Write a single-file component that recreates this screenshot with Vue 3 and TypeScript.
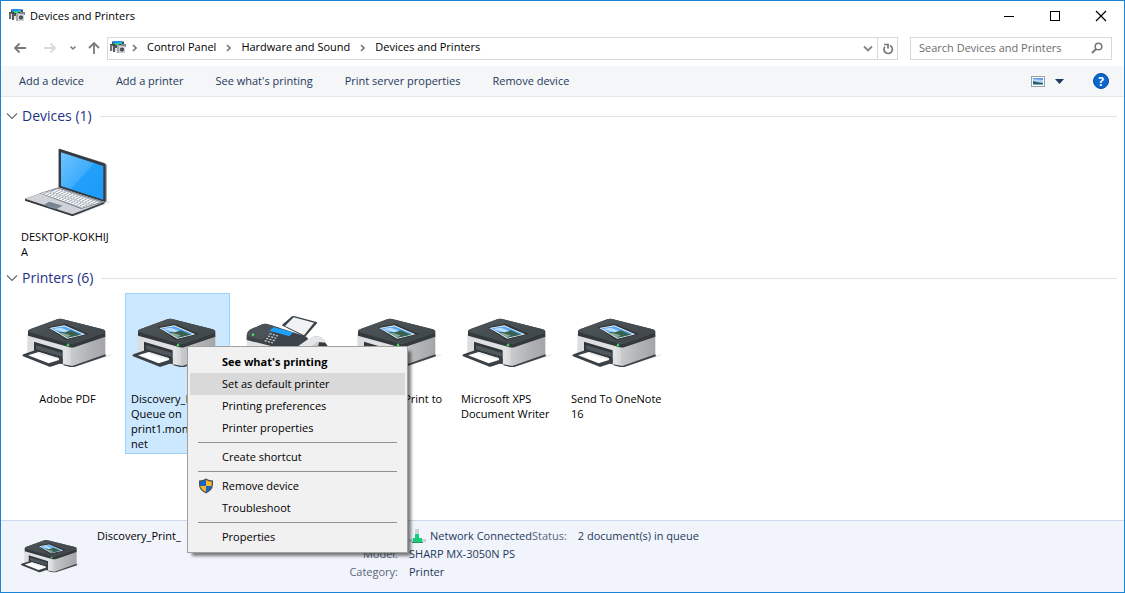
<script setup lang="ts">
import { ref } from 'vue'

type IconKind = 'laptop' | 'printer' | 'fax'

interface Device {
  id: string
  lines: string[]
  icon: IconKind
}

interface Group {
  title: string
  items: Device[]
}

interface MenuEntry {
  label: string
  bold?: boolean
  shield?: boolean
  separatorBefore?: boolean
}

const crumbs: string[] = ['Control Panel', 'Hardware and Sound', 'Devices and Printers']

const commands: string[] = [
  'Add a device',
  'Add a printer',
  "See what's printing",
  'Print server properties',
  'Remove device',
]

const groups: Group[] = [
  { title: 'Devices', items: [{ id: 'desktop', lines: ['DESKTOP-KOKHIJ', 'A'], icon: 'laptop' }] },
  {
    title: 'Printers',
    items: [
      { id: 'pdf', lines: ['Adobe PDF'], icon: 'printer' },
      { id: 'discovery', lines: ['Discovery_Print_', 'Queue on', 'print1.mon', 'net'], icon: 'printer' },
      { id: 'fax', lines: [], icon: 'fax' },
      { id: 'print-to', lines: ['Microsoft Print to'], icon: 'printer' },
      { id: 'xps', lines: ['Microsoft XPS', 'Document Writer'], icon: 'printer' },
      { id: 'onenote', lines: ['Send To OneNote', '16'], icon: 'printer' },
    ],
  },
]

const menu: MenuEntry[] = [
  { label: "See what's printing", bold: true },
  { label: 'Set as default printer' },
  { label: 'Printing preferences' },
  { label: 'Printer properties' },
  { label: 'Create shortcut', separatorBefore: true },
  { label: 'Remove device', shield: true, separatorBefore: true },
  { label: 'Troubleshoot' },
  { label: 'Properties', separatorBefore: true },
]

const selected = ref('discovery')
const highlighted = ref('Set as default printer')
const query = ref('')
</script>

<template>
  <div class="window">
    <svg class="defs" width="0" height="0" aria-hidden="true">
      <defs>
        <linearGradient id="side" x1="0" x2="1" y1="0" y2="0">
          <stop offset="0" stop-color="#c9cacc" />
          <stop offset="0.5" stop-color="#b3b4b6" />
          <stop offset="1" stop-color="#a4a5a8" />
        </linearGradient>
        <linearGradient id="front" x1="0" x2="1" y1="0" y2="0">
          <stop offset="0" stop-color="#dcdde0" />
          <stop offset="0.85" stop-color="#e1e2e4" />
          <stop offset="1" stop-color="#cfd0d2" />
        </linearGradient>
        <linearGradient id="lid" x1="0" x2="1" y1="0" y2="1">
          <stop offset="0" stop-color="#50575b" />
          <stop offset="1" stop-color="#3d4448" />
        </linearGradient>
        <linearGradient id="glass" x1="0" x2="1" y1="0" y2="1">
          <stop offset="0" stop-color="#6fc4ff" />
          <stop offset="0.5" stop-color="#3fadfc" />
          <stop offset="0.51" stop-color="#22a0fb" />
          <stop offset="1" stop-color="#1a9bfa" />
        </linearGradient>
        <pattern id="keys" width="9" height="7" patternUnits="userSpaceOnUse" patternTransform="matrix(1 .33 -.9 .33 0 0)">
          <rect width="9" height="7" fill="#a0a7b0" />
          <rect width="7" height="5" fill="#fafbfc" />
        </pattern>
        <symbol id="printer" viewBox="0 0 286 178" overflow="visible">
          <path d="M180 172 276 134 291 133 286 139 274 140Z" fill="#e6e6e8" opacity=".7" />
          <path d="M37 72 170 108 173 170 145 164 37 132Z" fill="url(#front)" />
          <path d="M168 108 271 76 271 136 176 169 168 168Z" fill="url(#side)" />
          <path d="M145 163 172 168 271 133 273 139 178 171 165 171 145 166Z" fill="#3c4348" />
          <path d="M39 63Q39 60 47 57L127 28Q133 25 141 27L263 58Q271 60 271 65V80L180 111Q172 114 164 112L39 77Z" fill="#33393d" />
          <path d="M39 63Q39 60 47 57L127 28Q133 25 141 27L263 58Q271 60 271 65L180 98Q172 101 164 99Z" fill="url(#lid)" />
          <path d="M39 64 164 100Q172 102 180 99L271 66" fill="none" stroke="#596064" stroke-width="1.5" />
          <path d="M98 51 151 41 222 72 153 91Z" fill="#30363a" />
          <path d="M103 54 148 46 211 73 157 86Z" fill="#f5f8fb" />
          <path d="M109 55 148 49 204 72 158 83Z" fill="#55a8f4" />
          <path d="M112 57 138 53 172 67 154 72 142 65Z" fill="#b9dcff" />
          <path d="M132 66 150 67 168 61 186 69 198 74 158 83Z" fill="#36624f" />
          <path d="M129 68 143 69 167 76 158 82Z" fill="#8aa996" />
          <path d="M57 95 143 121V163L57 137Z" fill="#30373b" />
          <path d="M63 105 140 128V140L63 118Z" fill="#50585d" />
          <path d="M22 136Q22 134 27 132L60 121 143 146V158L107 170Q102 171 98 168L24 139Z" fill="#3b4247" />
          <path d="M39 136 71 126 132 145V150L101 160Z" fill="#fff" />
          <path d="M71 126 132 145V150L68 130Z" fill="#e9eaec" />
          <path d="M155 104 160 100 163 105 162 109 155 107Z" fill="#42e35b" />
        </symbol>
        <symbol id="laptop" viewBox="0 0 300 240" overflow="visible">
          <path d="M178 222 275 182 291 186 184 228Z" fill="#ededee" />
          <path d="M131 29Q131 25 135 27L270 69Q276 71 276 76V183L268 188 131 144Z" fill="#a8adb1" />
          <path d="M131 29Q131 25 135 27L267 70Q272 72 272 76V187L131 143Z" fill="#363a3e" />
          <path d="M138 37 265 78V179L138 138Z" fill="url(#glass)" />
          <path d="M30 176 130 142 268 186V191L176 227Q172 229 168 227L30 182Z" fill="#373c41" />
          <path d="M30 176 130 142 268 186 176 221Q172 223 168 221Z" fill="#cfd3d9" />
          <path d="M73 160 131 143 268 186 198 207Z" fill="#7d8894" />
          <path d="M78 160 132 146 258 186 200 204Z" fill="url(#keys)" />
          <path d="M85 195 103 185 143 197 123 208Z" fill="#758392" />
          <path d="M98 199 113 203 133 200" fill="none" stroke="#8d99a5" stroke-width="2" />
        </symbol>
        <symbol id="fax" viewBox="0 0 300 200" overflow="visible">
          <path d="M50 142 160 180 290 178 284 150Q268 134 248 140L220 170Z" fill="#c8cacc" />
          <path d="M50 148 105 164 220 200H50Z" fill="#e2e3e5" />
          <path d="M268 155 284 156 293 168V190H258Z" fill="#353b40" />
          <path d="M155 106 186 79Q188 77 192 78L260 96Q263 98 261 100L225 141Z" fill="#3c4347" />
          <path d="M165 108 191 82 252 98 222 136Z" fill="#f1f2f3" />
          <path d="M50 138Q51 124 62 118L97 103Q104 100 112 102L222 137Q238 143 236 158L220 190 160 178 50 150Z" fill="#3d4449" />
          <path d="M50 138Q51 124 62 118L97 103Q104 100 112 102L150 114 95 150Z" fill="#4c5358" />
          <path d="M118 122 131 112 189 127 178 139Z" fill="#1ea0fb" />
          <path d="M119 131 148 139M114 138 143 146M109 145 138 153M104 152 133 160" stroke="#dadddf" stroke-width="3.5" stroke-dasharray="6 4" />
          <path d="M205 168 238 145Q255 135 274 143L284 150V158L262 155 240 172Z" fill="#e5e6e8" />
          <circle cx="69" cy="134" r="4" fill="#38df55" />
        </symbol>
        <symbol id="devices-glyph" viewBox="0 0 16 16">
          <path d="M0 4H2V1.500H14V6H0Z" fill="#44494d" />
          <path d="M3 1H12V4H3Z" fill="#1c8fe8" />
          <path d="M5 3H9V5H5Z" fill="#35cf62" />
          <path d="M9 2H12V4H9Z" fill="#21b7ee" />
          <path d="M0 5H3V11H0Z" fill="#6a6f73" />
          <path d="M2 6H9V11H2Z" fill="#dcdee0" />
          <path d="M3 6H8V8H5V12H3Z" fill="#54595d" />
          <path d="M7 5H15V13H7Z" fill="#a4a8ac" />
          <path d="M11 4H16V7H11Z" fill="#80868b" />
          <rect x="9" y="6" width="6" height="7" fill="#cfd2d4" />
          <circle cx="12" cy="9.500" r="2" fill="#33383c" />
          <circle cx="12" cy="9.500" r=".8" fill="#7d858c" />
        </symbol>
      </defs>
    </svg>

    <header class="titlebar">
      <svg class="app-icon" viewBox="0 0 16 16" aria-hidden="true"><use href="#devices-glyph" /></svg>
      <h1>Devices and Printers</h1>
      <div class="caption-buttons">
        <button type="button" aria-label="Minimize">
          <svg width="12" height="12" viewBox="0 0 12 12"><path d="M1 6.500H11" stroke="#000" /></svg>
        </button>
        <button type="button" aria-label="Maximize">
          <svg width="12" height="12" viewBox="0 0 12 12"><rect x="1.500" y="1.500" width="9" height="9" fill="none" stroke="#000" /></svg>
        </button>
        <button type="button" aria-label="Close">
          <svg width="12" height="12" viewBox="0 0 12 12"><path d="M1 1 11 11M11 1 1 11" stroke="#000" stroke-width="1.200" /></svg>
        </button>
      </div>
    </header>

    <nav class="navbar" aria-label="Location">
      <div class="history">
        <button type="button" class="arrow" aria-label="Back">
          <svg width="14" height="12" viewBox="0 0 14 12"><path d="M13 6H2M6.500 1.500 2 6 6.500 10.500" fill="none" stroke="#7a7a7a" stroke-width="1.800" /></svg>
        </button>
        <button type="button" class="arrow" aria-label="Forward">
          <svg width="14" height="12" viewBox="0 0 14 12"><path d="M1 6H12M7.500 1.500 12 6 7.500 10.500" fill="none" stroke="#d9d9d9" stroke-width="1.800" /></svg>
        </button>
        <button type="button" class="recent" aria-label="Recent locations">
          <svg width="8" height="6" viewBox="0 0 8 6"><path d="M1.500 1.500 4 4 6.500 1.500" fill="none" stroke="#7a7a7a" stroke-width="1.500" /></svg>
        </button>
        <button type="button" class="up" aria-label="Up">
          <svg width="14" height="14" viewBox="0 0 14 14"><path d="M7 13V2M2 7 7 2 12 7" fill="none" stroke="#7a7a7a" stroke-width="1.800" /></svg>
        </button>
      </div>
      <div class="address">
        <svg class="app-icon" viewBox="0 0 16 16" aria-hidden="true"><use href="#devices-glyph" /></svg>
        <template v-for="crumb in crumbs" :key="crumb">
          <svg class="sep" width="5" height="8" viewBox="0 0 5 8" aria-hidden="true"><path d="M1 1 4 4 1 7" fill="none" stroke="#777" stroke-width="1.600" /></svg>
          <a href="#">{{ crumb }}</a>
        </template>
        <button type="button" class="drop" aria-label="Previous locations">
          <svg width="10" height="7" viewBox="0 0 10 7"><path d="M1 1.500 5 5.500 9 1.500" fill="none" stroke="#858585" stroke-width="1.800" /></svg>
        </button>
        <button type="button" class="refresh" aria-label="Refresh">
          <svg width="12" height="13" viewBox="0 0 12 13">
            <path d="M8 3.500A4.200 4.200 0 1 1 2.800 4.800" fill="none" stroke="#777" stroke-width="1.700" />
            <path d="M2 2.500H6V6.500" fill="none" stroke="#777" stroke-width="1.700" />
          </svg>
        </button>
      </div>
      <label class="search">
        <input v-model="query" type="text" placeholder="Search Devices and Printers" aria-label="Search Devices and Printers" />
        <svg width="12" height="12" viewBox="0 0 12 12" aria-hidden="true">
          <circle cx="7.500" cy="4.500" r="3.300" fill="none" stroke="#777" stroke-width="1.500" />
          <path d="M5 7 1 11" stroke="#777" stroke-width="1.900" />
        </svg>
      </label>
    </nav>

    <div class="toolbar">
      <button v-for="command in commands" :key="command" type="button" class="command">{{ command }}</button>
      <div class="tools">
        <button type="button" aria-label="Change your view">
          <svg width="14" height="11" viewBox="0 0 14 11">
            <rect x=".5" y=".5" width="13" height="10" fill="#fff" stroke="#9a9fa5" />
            <path d="M2 2H12V9H2Z" fill="#b5d8f8" />
            <path d="M2 2H12V4L2 3Z" fill="#5c98e6" />
            <path d="M2 5 6 6 12 7V8H2Z" fill="#2f5d63" />
            <path d="M2 8H12V9H2Z" fill="#6db0c4" />
          </svg>
        </button>
        <button type="button" class="more" aria-label="More options">
          <svg width="9" height="5" viewBox="0 0 9 5"><path d="M0 0H9L4.500 5Z" fill="#1e395b" /></svg>
        </button>
        <button type="button" class="help" aria-label="Get help">
          <span>?</span>
        </button>
      </div>
    </div>

    <main class="content">
      <section v-for="group in groups" :key="group.title" class="group">
        <h2>
          <button type="button" aria-expanded="true">
            <svg width="12" height="8" viewBox="0 0 12 8" aria-hidden="true"><path d="M1 1.500 6 6.500 11 1.500" fill="none" stroke="#6b6b6b" stroke-width="1.200" /></svg>
            {{ group.title }} ({{ group.items.length }})
          </button>
        </h2>
        <div class="tiles">
          <button
            v-for="item in group.items"
            :key="item.id"
            type="button"
            class="tile"
            :class="{ selected: item.id === selected }"
            @click="selected = item.id"
          >
            <svg v-if="item.icon === 'laptop'" class="picture" viewBox="3 -24 309 288" aria-hidden="true">
              <use href="#laptop" width="300" height="240" />
            </svg>
            <svg v-else-if="item.icon === 'fax'" class="picture" viewBox="18 12 309 288" aria-hidden="true">
              <use href="#fax" width="300" height="200" />
            </svg>
            <svg v-else class="picture" viewBox="3 -48 309 288" aria-hidden="true">
              <use href="#printer" width="286" height="178" />
            </svg>
            <span class="name" :class="{ wrapped: item.lines.length > 1 }">{{ item.lines.join('\n') }}</span>
          </button>
        </div>
      </section>
    </main>

    <footer class="details">
      <svg class="thumb" viewBox="0 0 286 178" aria-hidden="true"><use href="#printer" width="286" height="178" /></svg>
      <p class="title">Discovery_Print_</p>
      <dl>
        <dt></dt>
        <dd>
          <svg width="17" height="15" viewBox="0 0 17 15" aria-hidden="true">
            <rect x="0" y="10" width="17" height="3" fill="#c9ced4" />
            <rect x="6" y="0" width="4" height="6" fill="#cfd2d6" />
            <path d="M6 5H10V9H13V13H4V9H6Z" fill="#12cf7c" />
            <path d="M3 13.500H14" stroke="#2c8d66" />
          </svg>
          <span class="network">Network Connected</span>
          <span class="label">Status:</span>
          <span class="status">2 document(s) in queue</span>
        </dd>
        <dt>Model:</dt>
        <dd>SHARP MX-3050N PS</dd>
        <dt>Category:</dt>
        <dd>Printer</dd>
      </dl>
    </footer>

    <div class="menu" role="menu">
      <template v-for="entry in menu" :key="entry.label">
        <hr v-if="entry.separatorBefore" />
        <button
          type="button"
          role="menuitem"
          :class="{ bold: entry.bold, hot: entry.label === highlighted }"
          @mouseenter="highlighted = entry.label"
        >
          <svg v-if="entry.shield" width="16" height="16" viewBox="0 0 16 16" aria-hidden="true">
            <path d="M8 .5Q11 2.500 15 2.500V7Q14.500 12.500 8 15.500 1.500 12.500 1 7V2.500Q5 2.500 8 .5Z" fill="#4a5058" />
            <path d="M8 2V8H2.300V3.700Q5.500 3.500 8 2Z" fill="#1467c8" />
            <path d="M8 2V8H13.700V3.700Q10.500 3.500 8 2Z" fill="#fbb829" />
            <path d="M8 8V14Q3 11.500 2.300 8Z" fill="#fbb829" />
            <path d="M8 8V14Q13 11.500 13.700 8Z" fill="#1467c8" />
          </svg>
          <span>{{ entry.label }}</span>
        </button>
      </template>
    </div>
  </div>
</template>

<style>
body {
  margin: 0;
}
</style>

<style scoped>
.window {
  position: relative;
  box-sizing: border-box;
  display: flex;
  flex-direction: column;
  min-height: 100vh;
  border: 1px solid #1883d7;
  background: #fff;
  color: #000;
  font: 11px/15px 'Open Sans', 'Noto Sans', sans-serif;
}

.defs {
  position: absolute;
}

button {
  display: flex;
  align-items: center;
  justify-content: center;
  margin: 0;
  padding: 0;
  border: 0;
  background: none;
  color: inherit;
  font: inherit;
  white-space: nowrap;
}

h1,
h2,
p,
dl,
dd {
  margin: 0;
  font: inherit;
}

.app-icon {
  width: 16px;
  height: 16px;
  flex: none;
}

.titlebar {
  display: flex;
  align-items: center;
  gap: 5px;
  height: 29px;
  padding-left: 8px;
}

.caption-buttons {
  display: flex;
  margin-left: auto;
}

.caption-buttons button {
  width: 46px;
  height: 29px;
}

.navbar {
  display: flex;
  align-items: center;
  height: 36px;
  padding-right: 12px;
}

.history {
  display: flex;
  align-items: center;
  width: 106px;
  flex: none;
}

.arrow {
  width: 30px;
}

.history .arrow:first-child {
  margin-left: 4px;
}

.recent {
  width: 16px;
}

.up {
  width: 25px;
}

.address {
  box-sizing: border-box;
  display: flex;
  align-items: center;
  flex: 1;
  height: 23px;
  padding-left: 2px;
  border: 1px solid #d9d9d9;
}

.address a {
  padding-bottom: 3px;
  color: #000;
  text-decoration: none;
}

.sep {
  margin: 0 10px;
}

.app-icon + .sep {
  margin-left: 6px;
}

.drop {
  width: 19px;
  height: 21px;
  margin-left: auto;
}

.refresh {
  width: 20px;
  height: 21px;
  border-left: 1px solid #d9d9d9;
}

.search {
  box-sizing: border-box;
  display: flex;
  align-items: center;
  width: 202px;
  height: 23px;
  margin-left: 12px;
  padding: 0 8px;
  border: 1px solid #d9d9d9;
}

.search input {
  flex: 1;
  min-width: 0;
  padding: 0 0 2px;
  border: 0;
  outline: 0;
  background: none;
  color: #000;
  font: inherit;
}

.search input::placeholder {
  color: #6d6d6d;
  opacity: 1;
}

.toolbar {
  display: flex;
  align-items: center;
  gap: 32px;
  height: 30px;
  padding: 0 15px 0 18px;
  border-bottom: 1px solid #e5e6e8;
  background: #f5f6f8;
  color: #1e395b;
}

.command {
  padding-bottom: 2px;
}

.tools {
  display: flex;
  align-items: center;
  margin-left: auto;
}

.more {
  margin-left: 10px;
}

.help {
  width: 16px;
  height: 16px;
  margin-left: 29px;
  border: 1px solid #0c4da2;
  border-radius: 50%;
  background: #0a66cf;
  color: #fff;
  font-weight: 700;
  font-size: 12px;
}

.content {
  flex: 1;
  padding: 9px 7px 0 5px;
}

.group {
  margin-bottom: 6px;
}

h2 {
  display: flex;
  align-items: center;
  gap: 8px;
  margin-bottom: 5px;
  color: #1e3287;
  font-size: 14px;
  line-height: 20px;
}

h2::after {
  content: '';
  flex: 1;
  height: 1px;
  background: #e2e2e2;
}

h2 button {
  gap: 4px;
}

.tiles {
  display: flex;
  flex-wrap: wrap;
  align-items: flex-start;
  gap: 5px;
  padding-left: 9px;
}

.tile {
  box-sizing: border-box;
  flex-direction: column;
  width: 105px;
  padding-bottom: 2px;
  border: 1px solid transparent;
}

.tile.selected {
  border-color: #99d1ff;
  background: #cce8ff;
}

.picture {
  width: 103px;
  height: 96px;
}

.name {
  min-height: 15px;
  margin-top: 1px;
  text-align: left;
  white-space: pre-line;
}

.wrapped {
  width: 93px;
}

.details {
  display: flex;
  padding: 6px 15px 11px;
  border-top: 1px solid #ccd9ea;
  background: #f1f4fb;
  line-height: 18px;
}

.thumb {
  width: 64px;
  height: 40px;
  margin-top: 7px;
}

.title {
  width: 240px;
  margin-left: 17px;
}

.details dl {
  display: grid;
  grid-template-columns: 61px auto;
  column-gap: 11px;
  color: #1e395b;
}

.details dt {
  color: #5a6779;
  text-align: right;
}

.details dd {
  display: flex;
  align-items: center;
  height: 18px;
}

.network {
  margin-left: 4px;
}

.label {
  color: #5a6779;
}

.status {
  margin-left: 11px;
}

.menu {
  position: absolute;
  top: 345px;
  left: 186px;
  box-sizing: border-box;
  width: 221px;
  padding: 4px 2px;
  border: 1px solid #a0a0a0;
  background: #f1f1f1;
  box-shadow: 4px 4px 3px -1px rgba(0, 0, 0, 0.5);
}

.menu button {
  display: grid;
  grid-template-columns: 32px 1fr;
  justify-items: center;
  width: 100%;
  height: 22px;
}

.menu span {
  grid-column: 2;
  justify-self: start;
  padding-bottom: 2px;
}

.menu svg {
  grid-column: 1;
  grid-row: 1;
}

.menu .bold {
  font-weight: 700;
}

.menu .hot {
  background: #d9d9d9;
}

.menu hr {
  height: 1px;
  margin: 3px 8px;
  border: 0;
  background: #919191;
}
</style>
